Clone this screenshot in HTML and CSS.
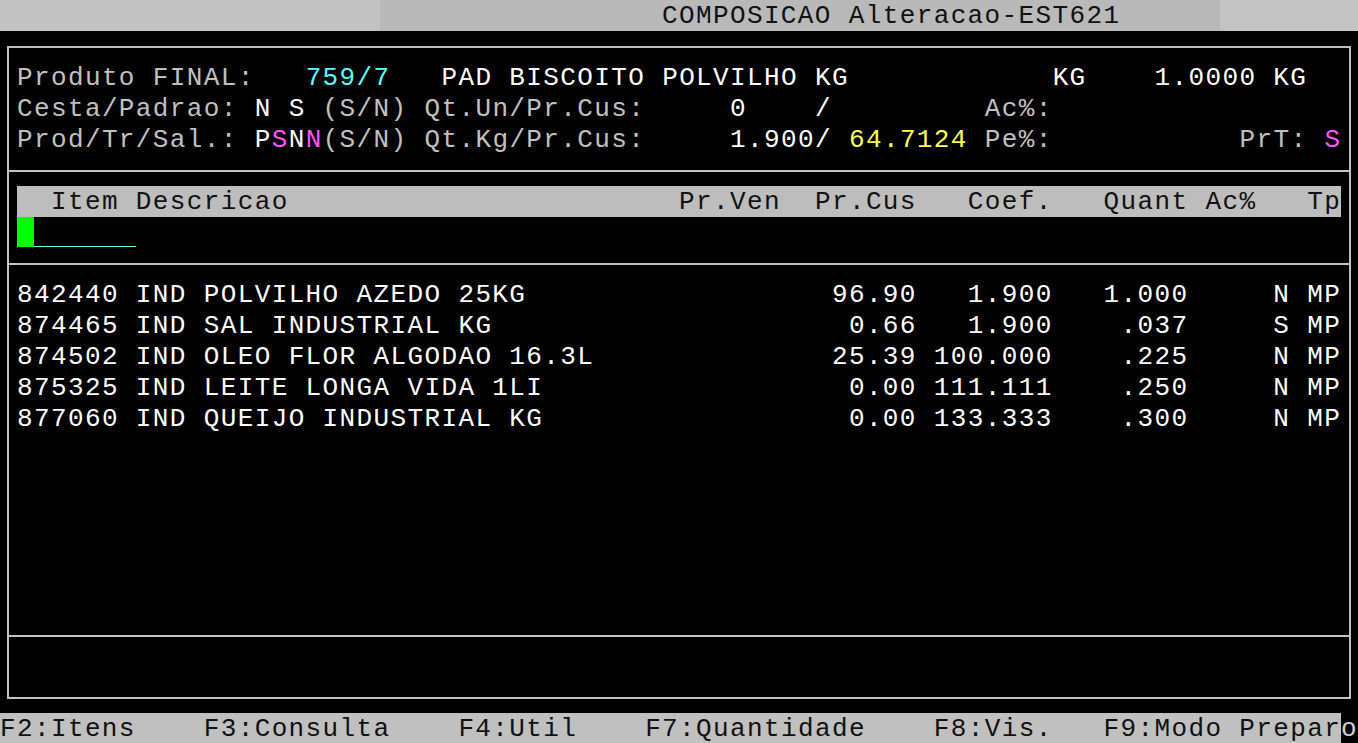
FILE: index.html
```html
<!DOCTYPE html>
<html lang="pt">
<head>
    <meta charset="UTF-8">
    <title>COMPOSICAO Alteracao-EST621</title>
    <link rel="stylesheet" href="styles.css">
</head>
<body>
    <div class="screen">
        <div class="line title-bar">COMPOSICAO Alteracao-EST621</div>

        <div class="box">
            <div class="sect header-info">
                <div class="line"><span class="lbl">Produto FINAL:   </span><span class="cyan">759/7</span>   <span class="val">PAD BISCOITO POLVILHO KG            KG    1.0000 KG</span></div>
                <div class="line"><span class="lbl">Cesta/Padrao: </span><span class="val">N S</span> <span class="lbl">(S/N) Qt.Un/Pr.Cus:</span>     <span class="val">0    /</span>         <span class="lbl">Ac%:</span></div>
                <div class="line"><span class="lbl">Prod/Tr/Sal.: </span><span class="val">P</span><span class="mag">S</span><span class="val">N</span><span class="mag">N</span><span class="lbl">(S/N) Qt.Kg/Pr.Cus:</span>     <span class="val">1.900/</span> <span class="yel">64.7124</span> <span class="lbl">Pe%:</span>           <span class="lbl">PrT:</span> <span class="mag">S</span></div>
            </div>

            <div class="sect">
                <div class="line head">  Item Descricao                       Pr.Ven  Pr.Cus   Coef.   Quant Ac%   Tp</div>
                <div class="line input">
                    <span class="cursor"></span>
                    <span class="field"></span>
                </div>
            </div>

            <div class="sect items">
                <div class="line">842440 IND POLVILHO AZEDO 25KG                  96.90   1.900   1.000     N MP</div>
                <div class="line">874465 IND SAL INDUSTRIAL KG                     0.66   1.900    .037     S MP</div>
                <div class="line">874502 IND OLEO FLOR ALGODAO 16.3L              25.39 100.000    .225     N MP</div>
                <div class="line">875325 IND LEITE LONGA VIDA 1LI                  0.00 111.111    .250     N MP</div>
                <div class="line">877060 IND QUEIJO INDUSTRIAL KG                  0.00 133.333    .300     N MP</div>
            </div>

            <div class="sect message">
                <div class="line"></div>
            </div>
        </div>

        <div class="line footer"><span class="keys">F2:Itens    F3:Consulta    F4:Util    F7:Quantidade    F8:Vis.   F9:Modo Prepar</span><span class="last">o</span></div>
    </div>
</body>
</html>
```

FILE: styles.css
```css
:root {
    --cw: 16.975px;
}
html, body {
    margin: 0;
    padding: 0;
    background-color: #000000;
}
body {
    width: 1358px;
    height: 743px;
    overflow: hidden;
}
.screen {
    font-family: 'Liberation Mono', 'Courier New', monospace;
    font-size: 26px;
    letter-spacing: 1.375px;
    color: #ffffff;
}
.line {
    height: 31px;
    line-height: 32px;
    white-space: pre;
}
.title-bar {
    background: linear-gradient(to right, #c2c2c2 0, #c2c2c2 380px, #b9b9b9 380px, #b9b9b9 1220px, #c3c3c3 1220px);
    color: #111111;
    padding-left: calc(var(--cw) * 39);
}
.box {
    margin: 15px 7px 14px;
    border: 2px solid #c0c0c0;
}
.sect {
    padding: 14px 8px 15px;
    border-bottom: 2px solid #c0c0c0;
}
.sect:last-child {
    border-bottom: none;
}
.items {
    height: 341px;
}
.lbl {
    color: #c0c0c0;
}
.val {
    color: #ffffff;
}
.cyan {
    color: #55ffff;
}
.yel {
    color: #ffff55;
}
.mag {
    color: #ff55ff;
}
.head {
    background-color: #bdbdbd;
    color: #111111;
}
.input {
    display: flex;
}
.cursor {
    width: var(--cw);
    height: 30px;
    background-color: #00ff00;
}
.field {
    width: calc(var(--cw) * 6);
    height: 30px;
    box-sizing: border-box;
    border-bottom: 1px solid #66ffff;
}
.items .line {
    color: #ffffff;
}
.footer {
    display: flex;
}
.keys {
    width: calc(var(--cw) * 79);
    background-color: #c0c0c0;
    color: #111111;
}
.last {
    color: #d0d0d0;
}
```
